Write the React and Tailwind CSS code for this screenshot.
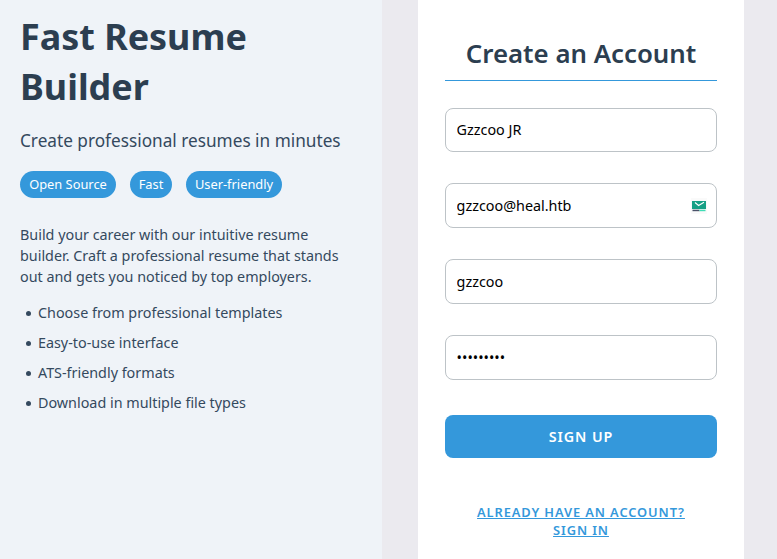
const tags = [
  { label: "Open Source", width: "w-24" },
  { label: "Fast", width: "w-[42px]" },
  { label: "User-friendly", width: "w-24" },
];
const features = [
  "Choose from professional templates",
  "Easy-to-use interface",
  "ATS-friendly formats",
  "Download in multiple file types",
];
const inputClass =
  "block w-full rounded-lg border border-[#bdc3c7] bg-white px-[10.6px] text-[14.35px] text-black outline-none";

function MailIcon() {
  return (
    <svg viewBox="0 0 16 16" className="absolute top-[15px] right-[10px] size-4">
      <rect width="16" height="16" fill="#fafafa" />
      <rect x="1" y="3" width="14" height="8" fill="#16a085" />
      <path d="M4 4.5l3.6 3L13 4.2" fill="none" stroke="#fff" strokeWidth="1.1" />
      <rect x="1.5" y="11.7" width="7" height="1.5" fill="#4b5269" />
      <rect x="8.5" y="11.7" width="6" height="1.5" fill="#3fdcb4" />
    </svg>
  );
}

export default function App() {
  return (
    <div className="flex h-[559px] w-[777px] overflow-hidden bg-[#ebeaef] font-['Noto_Sans',sans-serif]">
      <section className="w-[382px] shrink-0 bg-[#eff3f8] px-5 pt-3 text-[#34495e]">
        <h1 className="w-[300px] text-[35.9px] leading-[50px] font-bold text-[#2c3e50]">Fast Resume Builder</h1>
        <p className="mt-[17px] text-[17.22px] leading-6 whitespace-nowrap">Create professional resumes in minutes</p>
        <div className="mt-[18px] flex gap-[14px]">
          {tags.map((t) => (
            <span key={t.label} className={"rounded-full bg-[#3498db] text-center text-[12.85px] leading-[27px] whitespace-nowrap text-white " + t.width}>{t.label}</span>
          ))}
        </div>
        <p className="mt-[26px] w-[330px] text-[14.35px] leading-[21px]">
          Build your career with our intuitive resume builder. Craft a professional resume that stands out and gets you noticed by top employers.
        </p>
        <ul className="mt-[15px] flex flex-col gap-[9px] pl-[5.6px] text-[14.35px] leading-[21px]">
          {features.map((f) => (
            <li key={f} className="flex items-center gap-[7.2px]">
              <span className="mt-[2px] size-[5.2px] rounded-full bg-[#34495e]" />
              {f}
            </li>
          ))}
        </ul>
      </section>
      <main className="ml-9 w-[326px] shrink-0 bg-white px-[27px] pt-9">
        <h2 className="h-[45px] border-b border-[#3498db] text-center text-[25.8px] leading-[35px] font-semibold text-[#2c3e50]">Create an Account</h2>
        <form className="mt-[27px]">
          <input className={inputClass + " h-11 pb-[2px]"} defaultValue="Gzzcoo JR" />
          <div className="relative mt-[31px]">
            <input className={inputClass + " h-[45px]"} defaultValue="gzzcoo@heal.htb" />
            <MailIcon />
          </div>
          <input className={inputClass + " mt-[31px] h-[45px]"} defaultValue="gzzcoo" />
          <input type="password" className={inputClass + " mt-[31px] h-[45px]"} defaultValue="password1" />
          <button type="button" className="mt-[35px] block h-[43px] w-full rounded-lg bg-[#3498db] text-[14.3px] font-semibold tracking-[0.9px] text-white">SIGN UP</button>
        </form>
        <a className="mt-[45px] block text-center text-[12.85px] leading-[18px] font-semibold tracking-[0.9px] text-[#3498db] underline">
          ALREADY HAVE AN ACCOUNT?<br />SIGN IN
        </a>
      </main>
    </div>
  );
}
